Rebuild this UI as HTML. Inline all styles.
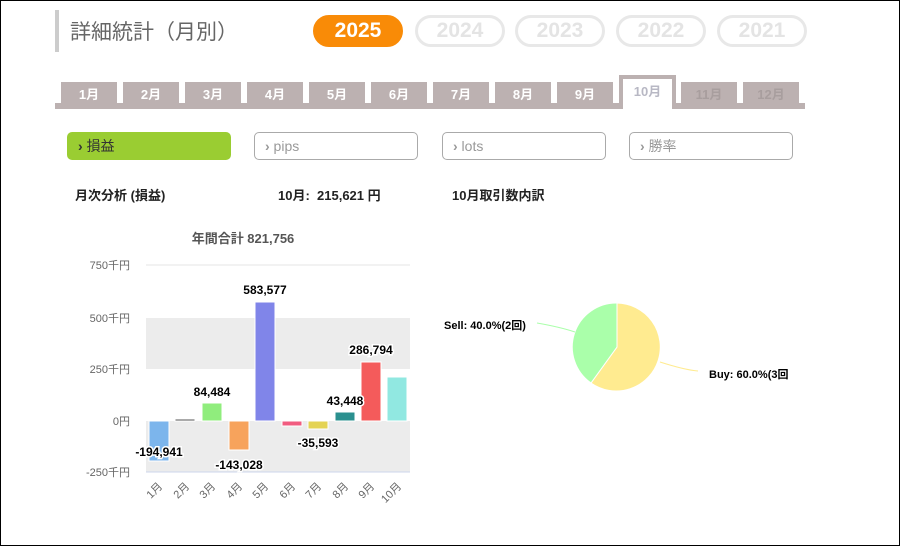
<!DOCTYPE html>
<html><head><meta charset="utf-8"><style>
*{margin:0;padding:0;box-sizing:border-box}
body{width:900px;height:546px;background:#fff;position:relative;overflow:hidden;font-family:"Liberation Sans","Noto Sans CJK JP",sans-serif;border:1px solid #000}
.a{position:absolute}
.yr{position:absolute;top:14px;height:32px;width:90px;border-radius:16px;border:3px solid #e8e8e8;color:#e4e4e4;font-weight:bold;font-size:21px;text-align:center;line-height:26px}
.tab{position:absolute;top:81px;height:22px;width:56px;background:#bcb1b1;color:#fff;font-weight:bold;font-size:13px;text-align:center;line-height:26px}
.btn{position:absolute;top:131px;height:28px;width:164px;border:1px solid #aaa;border-radius:5px;color:#999;font-size:14px;line-height:26px;padding-left:10px}
.b{font-weight:bold;font-size:13px;color:#222}
</style></head><body>
<div class="a" style="left:54px;top:9px;width:4px;height:42px;background:#ccc"></div>
<div class="a" style="left:69px;top:15px;font-size:21px;color:#666">詳細統計（月別）</div>
<div class="yr" style="left:312px;background:#f98b07;border-color:#f98b07;color:#fff">2025</div>
<div class="yr" style="left:414px">2024</div>
<div class="yr" style="left:514px">2023</div>
<div class="yr" style="left:615px">2022</div>
<div class="yr" style="left:716px">2021</div>
<div class="a" style="left:54px;top:102px;width:750px;height:6px;background:#bcb1b1"></div>
<div class="tab" style="left:60px">1月</div>
<div class="tab" style="left:122px">2月</div>
<div class="tab" style="left:184px">3月</div>
<div class="tab" style="left:246px">4月</div>
<div class="tab" style="left:308px">5月</div>
<div class="tab" style="left:370px">6月</div>
<div class="tab" style="left:432px">7月</div>
<div class="tab" style="left:494px">8月</div>
<div class="tab" style="left:556px">9月</div>
<div class="a" style="left:618px;top:74px;width:57px;height:34px;background:#fff;border:4px solid #bcb1b1;border-bottom:none;color:#b8b8c4;font-weight:bold;font-size:13px;text-align:center;line-height:26px">10月</div>
<div class="tab" style="left:680px;color:#a89e9e">11月</div>
<div class="tab" style="left:742px;color:#a89e9e">12月</div>
<div class="btn" style="left:66px;background:#9acd32;border-color:#9acd32;color:#333"><b>›</b> 損益</div>
<div class="btn" style="left:253px"><b>›</b> pips</div>
<div class="btn" style="left:441px"><b>›</b> lots</div>
<div class="btn" style="left:628px"><b>›</b> 勝率</div>
<div class="a b" style="left:74px;top:184px">月次分析 (損益)</div>
<div class="a b" style="left:277px;top:184px">10月:&nbsp; 215,621 円</div>
<div class="a b" style="left:451px;top:184px">10月取引数内訳</div>
<svg class="a" style="left:-1px;top:-1px" width="900" height="546">
<g font-family="Liberation Sans,Noto Sans CJK JP,sans-serif">
<text x="243" y="243" font-size="13" font-weight="bold" fill="#555" text-anchor="middle">年間合計 821,756</text>
<rect x="146" y="318" width="264" height="51" fill="#ececec"/>
<rect x="146" y="421" width="264" height="51" fill="#ececec"/>
<line x1="146" y1="265" x2="410" y2="265" stroke="#e6e6e6"/>
<line x1="146" y1="472" x2="410" y2="472" stroke="#ccd6eb"/>
<g font-size="11" fill="#666" text-anchor="end">
<text x="130" y="269">750千円</text><text x="130" y="322">500千円</text><text x="130" y="373">250千円</text><text x="130" y="425">0円</text><text x="130" y="476">-250千円</text></g>
<g stroke="#fff" stroke-width="1">
<rect x="149" y="421" width="20" height="40" fill="#7cb5ec"/>
<rect x="175" y="419" width="20" height="2" fill="#555"/>
<rect x="202" y="403" width="20" height="18" fill="#90ed7d"/>
<rect x="229" y="421" width="20" height="29" fill="#f7a35c"/>
<rect x="255" y="302" width="20" height="119" fill="#8085e9"/>
<rect x="282" y="421" width="20" height="5" fill="#f15c80"/>
<rect x="308" y="421" width="20" height="8" fill="#e4d354"/>
<rect x="335" y="412" width="20" height="9" fill="#2b908f"/>
<rect x="361" y="362" width="20" height="59" fill="#f45b5b"/>
<rect x="387" y="377" width="20" height="44" fill="#91e8e1"/>
</g>
<g font-size="12" font-weight="bold" fill="#000" stroke="#fff" stroke-width="3" paint-order="stroke" text-anchor="middle">
<text x="159" y="456">-194,941</text><text x="212" y="396">84,484</text><text x="239" y="469">-143,028</text><text x="265" y="294">583,577</text><text x="318" y="447">-35,593</text><text x="345" y="405">43,448</text><text x="371" y="354">286,794</text></g>
<g font-size="11" fill="#666" text-anchor="end">
<text transform="translate(163,487) rotate(-45)">1月</text><text transform="translate(190,487) rotate(-45)">2月</text><text transform="translate(216,487) rotate(-45)">3月</text><text transform="translate(243,487) rotate(-45)">4月</text><text transform="translate(269,487) rotate(-45)">5月</text><text transform="translate(296,487) rotate(-45)">6月</text><text transform="translate(322,487) rotate(-45)">7月</text><text transform="translate(349,487) rotate(-45)">8月</text><text transform="translate(375,487) rotate(-45)">9月</text><text transform="translate(402,487) rotate(-45)">10月</text></g>
<path d="M617 347 L617 303 A44 44 0 1 1 591 383 Z" fill="#ffeb90" stroke="#fff"/>
<path d="M617 347 L591 383 A44 44 0 0 1 617 303 Z" fill="#aaffaa" stroke="#fff"/>
<path d="M537 323 Q560 327 575 332" stroke="#aaffaa" fill="none"/>
<path d="M660 362 Q685 370 698 371" stroke="#ffeb90" fill="none"/>
<text x="444" y="329" font-size="11" font-weight="bold">Sell: 40.0%(2回)</text>
<text x="709" y="378" font-size="11" font-weight="bold">Buy: 60.0%(3回</text>
</g></svg>
</body></html>
